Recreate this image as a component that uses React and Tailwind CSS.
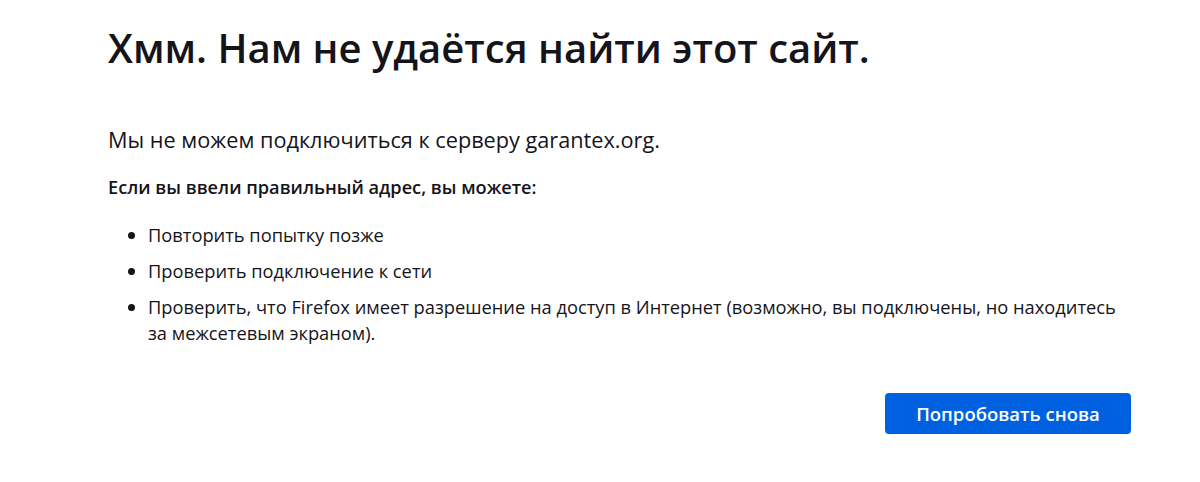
import React from "react";

export default function App() {
  return (
    <div
      className="min-h-screen bg-white text-[#15141a]"
      style={{ fontFamily: '"Open Sans", "Noto Sans", sans-serif' }}
    >
      <div className="ml-[108px] w-[1024px] pt-[22px]">
        <h1 className="text-[40px] leading-[52px] font-semibold">
          Хмм. Нам не удаётся найти этот сайт.
        </h1>
        <p className="mt-[52px] text-[21.7px] leading-[28px]">
          Мы не можем подключиться к серверу garantex.org.
        </p>
        <p className="mt-[21px] text-[18.2px] leading-[24px] font-semibold">
          Если вы ввели правильный адрес, вы можете:
        </p>
        <ul className="mt-[23px] pl-[40px] text-[18.3px] leading-[26px] list-disc">
          <li className="mb-[10px]">Повторить попытку позже</li>
          <li className="mb-[10px]">Проверить подключение к сети</li>
          <li>
            Проверить, что Firefox имеет разрешение на доступ в Интернет
            (возможно, вы подключены, но находитесь за межсетевым экраном).
          </li>
        </ul>
        <div className="mt-[47px] flex justify-end pr-[1px]">
          <button className="h-[41px] w-[246px] rounded-[4px] bg-[#0061e0] text-[18.5px] font-semibold text-white">
            Попробовать снова
          </button>
        </div>
      </div>
    </div>
  );
}
